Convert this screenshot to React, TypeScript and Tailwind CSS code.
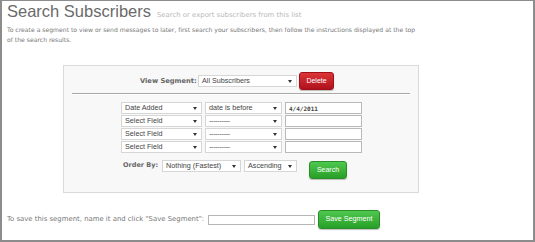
import React from "react";

const Caret = () => (
  <svg width="4" height="3" viewBox="0 0 4 3" className="shrink-0">
    <path d="M0 0 H4 L2 3 Z" fill="#333" />
  </svg>
);

function Sel({ w, text, dash }: { w: string; text: string; dash?: boolean }) {
  return (
    <div
      className={`${w} h-[12px] bg-white border border-[#d6d6d6] flex items-center justify-between pl-[3px] pr-[4px] text-[7.2px] leading-none text-[#444] font-['Liberation_Sans',Arial,sans-serif]`}
    >
      <span className={dash ? "tracking-[-0.3px] text-[#555]" : ""}>{text}</span>
      <Caret />
    </div>
  );
}

function Inp({ w, text }: { w: string; text?: string }) {
  return (
    <div className={`${w} h-[12px] bg-white border border-[#b9b9b9] flex items-center pl-[3px] text-[6px] font-bold text-[#444] font-['DejaVu_Sans_Mono',monospace]`}>
      {text}
    </div>
  );
}

export default function App() {
  const rows = [
    { a: "Date Added", b: "date is before", c: "4/4/2011", dash: false },
    { a: "Select Field", b: "----------", c: "", dash: true },
    { a: "Select Field", b: "----------", c: "", dash: true },
    { a: "Select Field", b: "----------", c: "", dash: true },
  ];
  return (
    <div className="w-[535px] h-[242px] border-t border-x-2 border-b-2 border-[#8c8c8c] bg-white overflow-hidden font-['DejaVu_Sans',Verdana,sans-serif]">
      <div className="pl-[5px] flex items-baseline gap-[6px]">
        <h1 className="text-[16.5px] leading-[20px] text-[#6a6a6a] font-['Liberation_Sans',Arial,sans-serif]">
          Search Subscribers
        </h1>
        <span className="text-[6.9px] text-[#b8b8b8]">Search or export subscribers from this list</span>
      </div>
      <p className="pl-[5px] mt-[4px] text-[6.1px] leading-[10px] text-[#777]">
        To create a segment to view or send messages to later, first search your subscribers, then follow the instructions displayed at the top
        <br />
        of the search results.
      </p>

      <div className="ml-[61px] mt-[20px] w-[356px] h-[128px] border border-[#dadada] bg-[#f8f8f8] flex flex-col">
        <div className="mt-[6px] h-[18px] flex items-center pl-[76px]">
          <span className="text-[6.7px] font-bold text-[#666] w-[58px]">View Segment:</span>
          <Sel w="w-[99px]" text="All Subscribers" />
          <button className="ml-[2px] w-[35px] h-[18px] rounded-[3px] border border-[#9e0f18] bg-gradient-to-b from-[#dc3438] to-[#b0101c] text-white text-[7px] font-['Liberation_Sans',Arial,sans-serif] shadow-[0_1px_1px_rgba(0,0,0,0.25)]">
            Delete
          </button>
        </div>
        <div className="mt-[3px] mx-[8px] h-[1px] bg-[#a8a8a8] shadow-[0_1px_0_#fff]" />
        <div className="mt-[8px] pl-[57px] flex flex-col gap-[1px]">
          {rows.map((r, i) => (
            <div key={i} className="flex gap-[3px]">
              <Sel w="w-[81px]" text={r.a} />
              <Sel w="w-[77px]" text={r.b} dash={r.dash} />
              <Inp w="w-[77px]" text={r.c} />
            </div>
          ))}
        </div>
        <div className="mt-[7px] pl-[59px] flex items-start">
          <span className="h-[11px] flex items-center text-[6.5px] font-bold text-[#666] w-[39px]">Order By:</span>
          <Sel w="w-[79px]" text="Nothing (Fastest)" />
          <div className="ml-[3px]">
            <Sel w="w-[53px]" text="Ascending" />
          </div>
          <button className="ml-[12px] mt-[1px] w-[38px] h-[18px] rounded-[3px] border border-[#2a8d2a] bg-gradient-to-b from-[#4fc84f] to-[#27a027] text-white text-[7px] font-['Liberation_Sans',Arial,sans-serif] shadow-[0_1px_1px_rgba(0,0,0,0.25)]">
            Search
          </button>
        </div>
      </div>

      <div className="mt-[17px] pl-[5px] flex items-center">
        <span className="text-[6.9px] text-[#777] w-[201px] whitespace-nowrap">To save this segment, name it and click "Save Segment":</span>
        <div className="w-[107px] h-[10px] bg-white border border-[#b5b5b5]" />
        <button className="ml-[3px] w-[62px] h-[19px] rounded-[3px] border border-[#2a8d2a] bg-gradient-to-b from-[#4fc84f] to-[#27a027] text-white text-[7.2px] font-['Liberation_Sans',Arial,sans-serif] shadow-[0_1px_1px_rgba(0,0,0,0.25)]">
          Save Segment
        </button>
      </div>
    </div>
  );
}
